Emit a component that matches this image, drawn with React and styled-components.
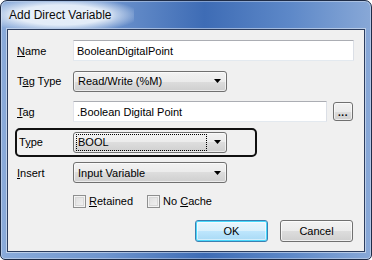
import React from 'react';
import styled, { createGlobalStyle, css } from 'styled-components';

const GlobalStyle = createGlobalStyle`
  html, body {
    margin: 0;
    padding: 0;
    background: #ffffff;
  }
  #root {
    width: 372px;
    height: 260px;
  }
`;

const Window = styled.div`
  box-sizing: border-box;
  width: 372px;
  height: 260px;
  display: flex;
  flex-direction: column;
  padding: 0 6px 7px 6px;
  border: 1px solid #1e2c47;
  border-radius: 7px 7px 5px 5px;
  background: linear-gradient(to right, #8aabda 0%, #6f95ce 28%, #3e6cb5 55%, #5d88c8 78%, #88a8d7 100%);
  box-shadow: inset 0 0 0 1px rgba(255, 255, 255, 0.35);
  font-family: "Liberation Sans", Arial, sans-serif;
  font-size: 11px;
  color: #000;
`;

const TitleBar = styled.div`
  height: 28px;
  display: flex;
  align-items: center;
  margin-left: -6px;
`;

const Title = styled.span`
  padding: 6px 22px 6px 8px;
  font-size: 12px;
  color: #0b0b0b;
  background: radial-gradient(ellipse 60% 70% at 45% 50%, rgba(232, 240, 250, 0.95) 55%, rgba(232, 240, 250, 0) 100%);
  text-shadow: 0 0 6px #ffffff;
`;

const Client = styled.div`
  flex: 1;
  display: flex;
  flex-direction: column;
  padding: 10px 10px 9px 9px;
  border: 1px solid #2c3d5e;
  background: #f0f0f0;
  box-shadow: 0 0 0 1px rgba(255, 255, 255, 0.45);
`;

const Form = styled.div`
  display: flex;
  flex-direction: column;
  gap: 9.5px;
`;

const Row = styled.div`
  position: relative;
  display: flex;
  align-items: center;
  height: 21px;

  ${p => p.$marked && css`
    &::before {
      content: '';
      position: absolute;
      left: -2px;
      top: -4px;
      width: 242px;
      height: 29px;
      box-sizing: border-box;
      border: 2px solid #111;
      border-radius: 5px;
    }
  `}
`;

const Label = styled.div`
  width: 56px;
  flex-shrink: 0;
  padding-left: ${p => (p.$shift ? '2px' : '0')};
  box-sizing: border-box;
`;

const TextBox = styled.div`
  box-sizing: border-box;
  width: ${p => p.$w}px;
  height: 21px;
  display: flex;
  align-items: center;
  padding-left: 3px;
  background: #ffffff;
  border: 1px solid;
  border-color: #abadb3 #dbdfe6 #e3e9ef #e2e3ea;
  border-radius: 1px;
`;

const Select = styled.div`
  box-sizing: border-box;
  width: 154px;
  height: 21px;
  display: flex;
  align-items: center;
  padding: 0 5px 0 2px;
  border: 1px solid #707070;
  border-radius: 3px;
  background: linear-gradient(#f2f2f2 0%, #ebebeb 50%, #dddddd 50%, #cfcfcf 100%);
  box-shadow: inset 0 0 0 1px rgba(255, 255, 255, 0.6);
`;

const SelectText = styled.div`
  flex: 1;
  height: 17px;
  display: flex;
  align-items: center;
  padding-left: 1px;
  box-sizing: border-box;
  border: 1px dotted ${p => (p.$focus ? '#000' : 'transparent')};
  margin-right: 7px;
`;

const Arrow = () => (
  <svg width="7" height="4" viewBox="0 0 7 4">
    <path d="M0 0h7L3.5 4z" fill="#000" />
  </svg>
);

const SmallButton = styled.div`
  box-sizing: border-box;
  width: 20px;
  height: 19px;
  margin-left: 6px;
  display: flex;
  align-items: flex-end;
  justify-content: center;
  padding-bottom: 4px;
  border: 1px solid #707070;
  border-radius: 3px;
  background: linear-gradient(#f2f2f2 0%, #ebebeb 50%, #dddddd 50%, #cfcfcf 100%);
  box-shadow: inset 0 0 0 1px rgba(255, 255, 255, 0.6);
  font-weight: bold;
  font-size: 10px;
  line-height: 6px;
  letter-spacing: 0.5px;
`;

const Checks = styled.div`
  display: flex;
  align-items: center;
  margin: 11px 0 0 56px;
  height: 14px;
`;

const Check = styled.div`
  display: flex;
  align-items: center;
  gap: 3px;
  margin-right: ${p => p.$gap || 0}px;
`;

const Box = styled.div`
  box-sizing: border-box;
  width: 13px;
  height: 13px;
  border: 1px solid #8e8f8f;
  background: linear-gradient(135deg, #dcdcdc 0%, #f4f4f4 100%);
  box-shadow: inset 0 0 0 1px #f4f4f4, inset 0 0 0 2px #d8d8d8;
`;

const Buttons = styled.div`
  margin-top: auto;
  display: flex;
  justify-content: flex-end;
  gap: 12px;
  padding-right: 1px;
`;

const Button = styled.div`
  box-sizing: border-box;
  width: 73px;
  height: 22px;
  display: flex;
  align-items: center;
  justify-content: center;
  border: 1px solid #707070;
  border-radius: 3px;
  background: linear-gradient(#f2f2f2 0%, #ebebeb 50%, #dddddd 50%, #cfcfcf 100%);
  box-shadow: inset 0 0 0 1px rgba(255, 255, 255, 0.7);

  ${p => p.$primary && css`
    border-color: #3c7fb1;
    background: linear-gradient(#eaf6fd 0%, #d9f0fc 50%, #bee6fd 50%, #a7d9f5 100%);
    box-shadow: inset 0 0 0 1px #48d8fb, inset 0 0 0 2px rgba(255, 255, 255, 0.5);
  `}
`;

export default function App() {
  return (
    <>
      <GlobalStyle />
      <Window>
        <TitleBar>
          <Title>Add Direct Variable</Title>
        </TitleBar>
        <Client>
          <Form>
            <Row>
              <Label><u>N</u>ame</Label>
              <TextBox $w={281}>BooleanDigitalPoint</TextBox>
            </Row>
            <Row>
              <Label>T<u>a</u>g Type</Label>
              <Select>
                <SelectText>Read/Write (%M)</SelectText>
                <Arrow />
              </Select>
            </Row>
            <Row>
              <Label><u>T</u>ag</Label>
              <TextBox $w={254}>.Boolean Digital Point</TextBox>
              <SmallButton>...</SmallButton>
            </Row>
            <Row $marked>
              <Label $shift>T<u>y</u>pe</Label>
              <Select>
                <SelectText $focus>BOOL</SelectText>
                <Arrow />
              </Select>
            </Row>
            <Row>
              <Label><u>I</u>nsert</Label>
              <Select>
                <SelectText>Input Variable</SelectText>
                <Arrow />
              </Select>
            </Row>
          </Form>
          <Checks>
            <Check $gap={14}>
              <Box />
              <span><u>R</u>etained</span>
            </Check>
            <Check>
              <Box />
              <span>No <u>C</u>ache</span>
            </Check>
          </Checks>
          <Buttons>
            <Button $primary>OK</Button>
            <Button>Cancel</Button>
          </Buttons>
        </Client>
      </Window>
    </>
  );
}
